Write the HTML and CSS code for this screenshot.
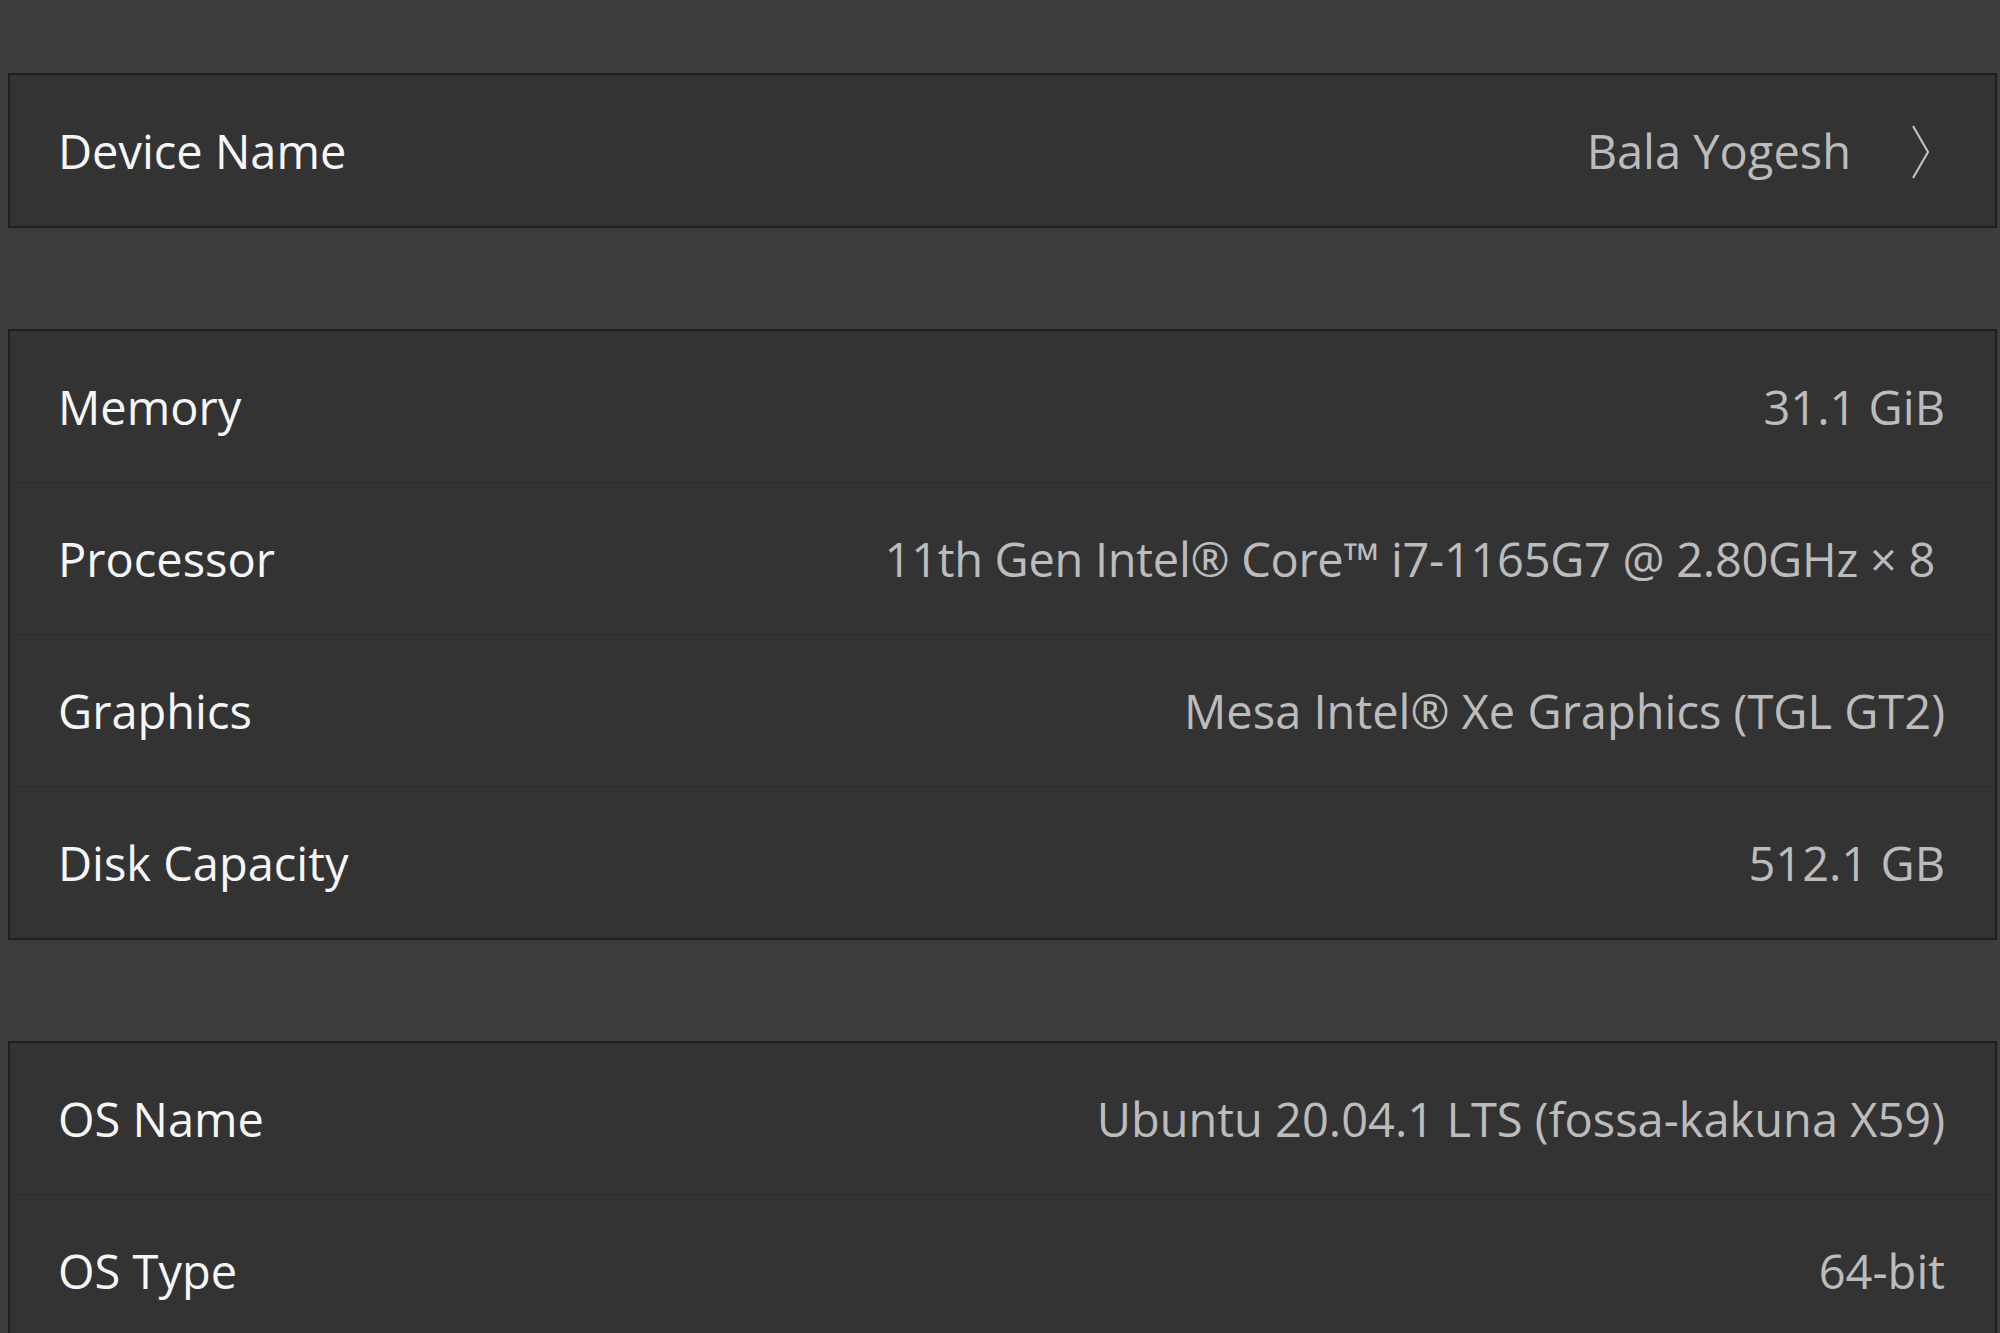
FILE: index.html
```html
<!DOCTYPE html>
<html lang="en">
<head>
<meta charset="utf-8">
<title>About</title>
<link rel="stylesheet" href="styles.css">
</head>
<body>
<main class="page">
  <section class="group">
    <div class="row row-link">
      <span class="label">Device Name</span>
      <span class="value value-link">Bala Yogesh</span>
      <svg class="chevron" width="20" height="54" viewBox="0 0 20 54" aria-hidden="true">
        <path d="M2 1 L17 27 L2 53" fill="none" stroke="#bdbdbd" stroke-width="2.2"/>
      </svg>
    </div>
  </section>

  <section class="group">
    <div class="row"><span class="label">Memory</span><span class="value">31.1 GiB</span></div>
    <div class="row"><span class="label">Processor</span><span class="value value-inset">11th Gen Intel® Core™ i7-1165G7 @ 2.80GHz × 8</span></div>
    <div class="row"><span class="label">Graphics</span><span class="value">Mesa Intel® Xe Graphics (TGL GT2)</span></div>
    <div class="row"><span class="label">Disk Capacity</span><span class="value">512.1 GB</span></div>
  </section>

  <section class="group">
    <div class="row"><span class="label">OS Name</span><span class="value">Ubuntu 20.04.1 LTS (fossa-kakuna X59)</span></div>
    <div class="row"><span class="label">OS Type</span><span class="value">64-bit</span></div>
  </section>
</main>
</body>
</html>
```

FILE: styles.css
```css
html, body {
  margin: 0;
  padding: 0;
}

body {
  background: #3c3c3c;
  font-family: "Open Sans", "Noto Sans", sans-serif;
  width: 2000px;
  height: 1333px;
  overflow: hidden;
}

.page {
  display: flex;
  flex-direction: column;
  gap: 101px;
  padding: 73px 3px 0 8px;
}

.group {
  background: #333333;
  border: 2px solid #1f1f1f;
  display: flex;
  flex-direction: column;
}

.row {
  height: 151px;
  display: flex;
  align-items: center;
  padding: 0 50px 0 48px;
  border-top: 1px solid #2c2c2c;
}

.row:first-child {
  border-top: none;
}

.row-link {
  padding-right: 64px;
}

.label,
.value {
  font-size: 47px;
  margin-top: 1px;
}

.label {
  color: #f6f6f6;
  flex: 1;
}

.value {
  color: #bcbcbc;
}

.value-link {
  margin-right: 60px;
}

.value-inset {
  margin-right: 10px;
  letter-spacing: -0.3px;
}

.chevron {
  display: block;
  margin-top: 2px;
}
```
